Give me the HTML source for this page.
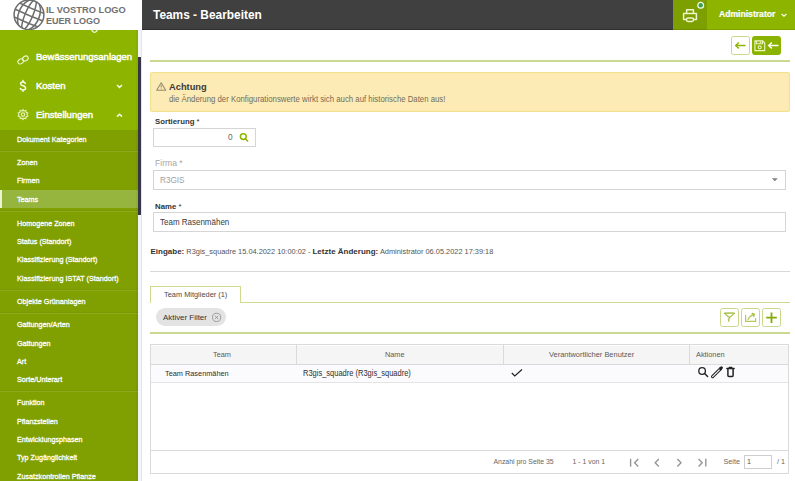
<!DOCTYPE html>
<html><head><meta charset="utf-8">
<style>
*{margin:0;padding:0;box-sizing:border-box}
html,body{width:795px;height:481px;overflow:hidden;background:#fff;font-family:"Liberation Sans",sans-serif}
.abs{position:absolute}
svg{position:absolute;overflow:visible}
#logo{left:0;top:0;width:142px;height:30px;background:#fff}
#logo .t{position:absolute;left:45.5px;font-size:9.3px;font-weight:bold;color:#707070;white-space:nowrap;line-height:10px;transform-origin:0 0}
#side{left:0;top:30px;width:138px;height:451px;background:#809f00;overflow:hidden}
#top{position:absolute;left:0;top:0;width:138px;height:100px;background:#8db500}
.ti{position:absolute;left:36px;color:#fff;font-size:9.5px;white-space:nowrap;line-height:10px;-webkit-text-stroke:0.45px #fff}
.si{position:absolute;left:17px;color:#fff;font-size:7.9px;white-space:nowrap;line-height:7px;-webkit-text-stroke:0.3px #fff;transform-origin:0 0;transform:scaleX(0.912)}
.sep{position:absolute;left:0;width:138px;height:2px;background:#8cab1c;border-top:1px solid #7a9800}
#scroll{left:138px;top:57px;width:3px;height:158px;background:#363648}
#gutter{left:138px;top:30px;width:4px;height:451px;background:#f3f3fa;border-right:1.5px solid #e6e6e6}
#hdr{left:142px;top:0;width:531px;height:30px;background:#404040;border-bottom:1px solid #2e2e2e}
#hdr .t{position:absolute;left:11px;top:9px;color:#fff;font-weight:bold;font-size:11.9px;line-height:12px}
#prn{left:673px;top:0;width:34px;height:30px;background:#7d9f00;border-bottom:1px solid #6f8f00}
#adm{left:707px;top:0;width:88px;height:30px;background:#8db500;border-bottom:1px solid #7fa300}
.lbl{position:absolute;font-size:7.8px;font-weight:bold;color:#333;white-space:nowrap;line-height:9px}
.inp{position:absolute;border:1px solid #d5d5d5;background:#fff}
.btn{position:absolute;border:1.4px solid #c8d78a;border-radius:2.5px;background:#fff}
.tx{position:absolute;white-space:nowrap}
</style></head><body>

<!-- Logo -->
<div id="logo" class="abs">
  <svg style="left:0;top:0" width="60" height="31" viewBox="0 0 60 31">
    <defs><clipPath id="gc"><circle cx="29" cy="14.8" r="15"/></clipPath></defs>
    <g clip-path="url(#gc)" stroke="#6d6d6d" stroke-width="1.5" fill="none">
      <g transform="rotate(23 29 14.8)">
        <ellipse cx="29" cy="14.8" rx="3.9" ry="16"/>
        <ellipse cx="29" cy="14.8" rx="10.4" ry="16"/>
        <path d="M10 14.8 Q29 16 48 14.8"/>
        <path d="M10 7.4 Q29 8.6 48 7.4"/>
        <path d="M10 22.2 Q29 23.4 48 22.2"/>
      </g>
    </g>
    <circle cx="29" cy="14.8" r="14.9" fill="none" stroke="#6d6d6d" stroke-width="1.5"/>
  </svg>
  <div class="t" style="top:5px;font-size:9.6px;transform:scaleX(0.968)">IL VOSTRO LOGO</div>
  <div class="t" style="top:16px;font-size:9.6px;transform:scaleX(0.94)">EUER LOGO</div>
</div>

<!-- Sidebar -->
<div id="side" class="abs">
  <div id="top">
    <svg style="left:90px;top:-2px" width="9" height="6" viewBox="0 0 9 6"><path d="M1.6 1.5 Q2.5 4.6 4.6 4.4 Q6.8 4.2 7.4 1.5" fill="none" stroke="#f2f8dc" stroke-width="1.3"/></svg>
    <svg style="left:16px;top:24px" width="14" height="12" viewBox="0 0 14 12"><g fill="none" stroke="#eef6cc" stroke-width="1.1" transform="rotate(-32 7 6)"><ellipse cx="4.3" cy="6" rx="3" ry="2.3"/><ellipse cx="9.8" cy="6" rx="3" ry="2.3"/></g></svg>
    <div class="ti" style="top:22px">Bewässerungsanlagen</div>
    <svg style="left:19px;top:50px" width="8" height="12" viewBox="0 0 8 12"><g fill="none" stroke="#f8fbe8" stroke-width="1.5" stroke-linecap="round"><path d="M6.3 3.4 Q5.8 2.1 4 2.1 Q1.6 2.1 1.6 3.8 Q1.6 5.2 4 5.8 Q6.6 6.4 6.6 8.2 Q6.6 9.9 4 9.9 Q1.9 9.9 1.4 8.4"/><path d="M4 0.6 V2.1 M4 9.9 V11.3"/></g></svg>
    <div class="ti" style="top:51px">Kosten</div>
    <svg style="left:115.5px;top:54px" width="7" height="5" viewBox="0 0 7 5"><path d="M1 1 L3.5 3.4 L6 1" fill="none" stroke="#f4f9e0" stroke-width="1.5"/></svg>
    <svg style="left:17px;top:79px" width="12" height="11" viewBox="0 0 12 11"><g fill="none" stroke="#e4f0b8" stroke-width="1.15"><path d="M6 0.6 L7 2 L8.8 1.5 L9.1 3.3 L10.8 4 L10 5.6 L10.8 7.2 L9.1 7.8 L8.8 9.6 L7 9.1 L6 10.5 L5 9.1 L3.2 9.6 L2.9 7.8 L1.2 7.2 L2 5.6 L1.2 4 L2.9 3.3 L3.2 1.5 L5 2 Z"/><circle cx="6" cy="5.6" r="1.7"/></g></svg>
    <div class="ti" style="top:80px">Einstellungen</div>
    <svg style="left:115.5px;top:83px" width="7" height="5" viewBox="0 0 7 5"><path d="M1 3.6 L3.5 1.2 L6 3.6" fill="none" stroke="#f4f9e0" stroke-width="1.5"/></svg>
  </div>
  <div class="si" style="top:106px">Dokument Kategorien</div>
  <div class="sep" style="top:120px"></div>
  <div class="si" style="top:129px">Zonen</div>
  <div class="si" style="top:147px">Firmen</div>
  <div class="abs" style="left:0;top:160px;width:138px;height:18px;background:#95b53f"></div>
  <div class="abs" style="left:0;top:160px;width:1.5px;height:18px;background:#eef3cf"></div>
  <div class="si" style="top:166px">Teams</div>
  <div class="sep" style="top:180px"></div>
  <div class="si" style="top:190px">Homogene Zonen</div>
  <div class="si" style="top:208px">Status (Standort)</div>
  <div class="si" style="top:226px">Klassifizierung (Standort)</div>
  <div class="si" style="top:245px">Klassifizierung ISTAT (Standort)</div>
  <div class="sep" style="top:259px"></div>
  <div class="si" style="top:268px">Objekte Grünanlagen</div>
  <div class="sep" style="top:282px"></div>
  <div class="si" style="top:291px">Gattungen/Arten</div>
  <div class="si" style="top:310px">Gattungen</div>
  <div class="si" style="top:328px">Art</div>
  <div class="si" style="top:346px">Sorte/Unterart</div>
  <div class="sep" style="top:360px"></div>
  <div class="si" style="top:369px">Funktion</div>
  <div class="si" style="top:388px">Pflanzstellen</div>
  <div class="si" style="top:406px">Entwicklungsphasen</div>
  <div class="si" style="top:424px">Typ Zugänglichkeit</div>
  <div class="si" style="top:443px">Zusatzkontrollen Pflanze</div>
  <div class="abs" style="left:136px;top:0;width:2px;height:451px;background:rgba(0,0,0,.035)"></div>
</div>
<div id="gutter" class="abs"></div>
<div id="scroll" class="abs"></div>

<!-- Header -->
<div id="hdr" class="abs"><div class="t">Teams - Bearbeiten</div></div>
<div id="prn" class="abs">
  <svg style="left:9px;top:8px" width="16" height="15" viewBox="0 0 16 15"><g fill="none" stroke="#eef4cc" stroke-width="1.5" stroke-linejoin="round"><path d="M4.6 5.5 V1.8 H11.4 V5.5"/><path d="M4 11.6 H1.6 V5.6 H14.4 V11.6 H12"/><rect x="4.4" y="10" width="7.2" height="3.4" rx="1.7"/></g></svg>
  <svg style="left:24px;top:1px" width="8" height="8" viewBox="0 0 8 8"><circle cx="3.7" cy="4.3" r="2.9" fill="#36a351" stroke="#fafff0" stroke-width="1.2"/></svg>
</div>
<div id="adm" class="abs">
  <div class="tx" style="left:12px;top:10px;color:#fff;font-weight:bold;font-size:8.6px;line-height:9px;-webkit-text-stroke:0.2px #fff">Administrator</div>
  <svg style="left:74px;top:13px" width="6" height="4" viewBox="0 0 6 4"><path d="M0.5 0.8 L3 3.2 L5.5 0.8" fill="none" stroke="#fff" stroke-width="1.1"/></svg>
</div>

<!-- Top buttons -->
<div class="btn" style="left:731px;top:36px;width:19px;height:19px"></div>
<svg style="left:735px;top:42px" width="11" height="7" viewBox="0 0 11 7"><g fill="none" stroke="#8db500" stroke-width="1.5"><path d="M0.8 3.5 H10.5"/><path d="M3.8 0.5 L0.8 3.5 L3.8 6.5"/></g></svg>
<div class="abs" style="left:752px;top:36px;width:29px;height:19px;background:#8ab300;border-radius:3px"></div>
<svg style="left:754px;top:40px" width="12" height="12" viewBox="0 0 12 12"><g fill="none" stroke="#eef6c4" stroke-width="1.1"><path d="M0.9 0.9 H8.6 L10.7 3 V10.6 H0.9 Z"/><path d="M2.4 1 V3.7 H8.4 V1"/><path d="M6.3 1.4 V3"/><circle cx="5.7" cy="7.3" r="1.5"/></g></svg>
<svg style="left:768px;top:42px" width="11" height="7" viewBox="0 0 11 7"><g fill="none" stroke="#fff" stroke-width="1.5"><path d="M0.8 3.5 H10.5"/><path d="M3.8 0.5 L0.8 3.5 L3.8 6.5"/></g></svg>
<div class="abs" style="left:150px;top:60px;width:639.5px;height:2px;background:#cad990"></div>

<!-- Alert -->
<div class="abs" style="left:150px;top:72px;width:640px;height:40px;background:#fdebb6;border:1.3px solid #eee48c;border-radius:2px;box-shadow:inset 0 0 0 1px #fce8b0"></div>
<svg style="left:156px;top:82px" width="11" height="9" viewBox="0 0 11 9"><g fill="none" stroke="#958c6c" stroke-width="1.1" stroke-linejoin="round"><path d="M5.2 0.8 L9.7 8.2 H0.7 Z"/><path d="M5.2 3.3 V5.6"/><path d="M5.2 6.5 V7.3"/></g></svg>
<div class="tx" style="left:169px;top:82px;font-size:9.3px;font-weight:bold;color:#3b3a36;line-height:10px">Achtung</div>
<div class="tx" style="left:169px;top:95.5px;font-size:8.2px;color:#746c55;line-height:8px;transform-origin:0 0;transform:scaleX(0.952)">die Änderung der Konfigurationswerte wirkt sich auch auf historische Daten aus!</div>

<!-- Form -->
<div class="lbl" style="left:155px;top:117px">Sortierung <span style="font-weight:normal">*</span></div>
<div class="inp" style="left:153px;top:128px;width:103px;height:19px"></div>
<div class="tx" style="left:228px;top:133px;font-size:8.3px;color:#666;line-height:8px">0</div>
<svg style="left:239px;top:133px" width="10" height="10" viewBox="0 0 10 10"><g fill="none" stroke="#8db500" stroke-width="1.5"><circle cx="4.3" cy="3.6" r="2.9"/><path d="M6.4 5.8 L9 8.6"/></g></svg>
<div class="lbl" style="left:155px;top:159px;color:#a8a8a8;font-weight:normal;font-size:8.6px">Firma *</div>
<div class="inp" style="left:153px;top:170px;width:633px;height:20px"></div>
<div class="tx" style="left:160px;top:177px;font-size:8.2px;color:#a0a0a0;line-height:8px">R3GIS</div>
<svg style="left:771px;top:178px" width="8" height="5" viewBox="0 0 8 5"><path d="M0.8 0.3 H6.8 L3.8 3.3 Z" fill="#808080"/></svg>
<div class="lbl" style="left:155px;top:202px">Name <span style="font-weight:normal">*</span></div>
<div class="inp" style="left:153px;top:212px;width:633px;height:20px"></div>
<div class="tx" style="left:160px;top:218px;font-size:8.7px;color:#3a3a3a;line-height:8px;transform-origin:0 0;transform:scaleX(0.92)">Team Rasenmähen</div>

<div class="tx" style="left:150.5px;top:248px;font-size:7.4px;color:#555;line-height:8px"><b style="color:#333;font-size:8px">Eingabe:</b> R3gis_squadre 15.04.2022 10:00:02 - <b style="color:#333;font-size:8px">Letzte Änderung:</b> Administrator 06.05.2022 17:39:18</div>
<div class="abs" style="left:150px;top:271px;width:640px;height:1px;background:#d8d8d8"></div>

<!-- Tabs -->
<div class="abs" style="left:150px;top:286px;width:91px;height:17px;border:1px solid #cddb8e;border-bottom:none;background:#fff"></div>
<div class="abs" style="left:240px;top:302px;width:549.5px;height:1px;background:#cddb8e"></div>
<div class="tx" style="left:164px;top:290.5px;font-size:8.1px;color:#4a4a4a;line-height:8px;transform-origin:0 0;transform:scaleX(0.914)">Team Mitglieder (1)</div>
<div class="abs" style="left:156px;top:308px;width:70px;height:18px;background:#e3e3e3;border-radius:9px"></div>
<div class="tx" style="left:163px;top:314px;font-size:7.9px;color:#333;line-height:8px">Aktiver Filter</div>
<svg style="left:212px;top:313px" width="10" height="10" viewBox="0 0 10 10"><g fill="none" stroke="#999" stroke-width="0.95"><circle cx="4.6" cy="4.4" r="4.1"/><path d="M3 2.8 L6.2 6 M6.2 2.8 L3 6"/></g></svg>
<div class="btn" style="left:720px;top:308px;width:19px;height:19px"></div>
<svg style="left:723px;top:312px" width="13" height="11" viewBox="0 0 13 11"><g fill="none" stroke="#a9c24a" stroke-linecap="round"><path d="M1.5 1.3 Q6.3 0.6 11.2 1.3" stroke-width="1.5"/><path d="M1.8 1.6 L5.6 5 M11 1.6 L7.2 5" stroke-width="1.1"/><path d="M6.6 5 Q6.6 6.6 5.6 7.3 Q6.3 8 5.6 9.3" stroke-width="1.3"/></g></svg>
<div class="btn" style="left:741px;top:308px;width:19px;height:19px"></div>
<svg style="left:744px;top:312px" width="13" height="11" viewBox="0 0 13 11"><g fill="none" stroke="#b2c956" stroke-width="1.2" stroke-linecap="round"><path d="M1.6 3.3 V9.4 H11.6 V6.6"/><path d="M3.9 7.6 Q5.5 3.8 9.6 2.6"/><path d="M8.2 1.4 L10.3 2.3 L9.6 4.4" stroke="#9cba30"/></g></svg>
<div class="btn" style="left:762px;top:308px;width:19px;height:19px"></div>
<svg style="left:765px;top:311px" width="13" height="13" viewBox="0 0 13 13"><g stroke="#84ab00" stroke-width="1.8"><path d="M6.5 1.4 V12 M1.2 6.7 H11.8"/></g></svg>
<div class="abs" style="left:150px;top:332px;width:639.5px;height:2px;background:#cad990"></div>

<!-- Table -->
<div class="abs" style="left:150px;top:344px;width:639px;height:130px;border:1px solid #dadada"></div>
<div class="abs" style="left:151px;top:345px;width:637px;height:20px;background:#f5f5f5;border-bottom:1px solid #dadada;box-shadow:inset 0 1px 0 #fff"></div>
<div class="abs" style="left:296px;top:345px;width:1px;height:20px;background:#dadada"></div>
<div class="abs" style="left:503px;top:345px;width:1px;height:20px;background:#dadada"></div>
<div class="abs" style="left:689px;top:345px;width:1px;height:20px;background:#dadada"></div>
<div class="tx" style="left:213px;top:351px;font-size:7.3px;color:#5a5a5a;line-height:8px">Team</div>
<div class="tx" style="left:385px;top:351px;font-size:7.3px;color:#5a5a5a;line-height:8px">Name</div>
<div class="tx" style="left:549px;top:351px;font-size:7.45px;color:#5a5a5a;line-height:8px">Verantwortlicher Benutzer</div>
<div class="tx" style="left:696px;top:351px;font-size:7.35px;color:#5a5a5a;line-height:8px">Aktionen</div>
<div class="abs" style="left:151px;top:365px;width:637px;height:17px;background:#fbfbfd"></div>
<div class="abs" style="left:151px;top:382px;width:637px;height:1px;background:#e4e4e4"></div>
<div class="tx" style="left:164.5px;top:369.6px;font-size:8.1px;color:#2e2e2e;line-height:8px;transform-origin:0 0;transform:scaleX(0.907)">Team Rasenmähen</div>
<div class="tx" style="left:302.5px;top:369.6px;font-size:8.2px;color:#2e2e2e;line-height:8px;transform-origin:0 0;transform:scaleX(0.915)">R3gis_squadre (R3gis_squadre)</div>
<svg style="left:511px;top:369px" width="12" height="8" viewBox="0 0 12 8"><path d="M0.8 4 L3.8 7 L11 0.5" fill="none" stroke="#222" stroke-width="1.2"/></svg>
<svg style="left:694px;top:363px" width="46" height="18" viewBox="0 0 46 18">
  <g fill="none" stroke="#222" stroke-linecap="round">
    <circle cx="8.1" cy="8" r="3.3" stroke-width="1.3"/>
    <path d="M10.6 10.5 L13.6 13.6" stroke-width="1.4"/>
    <path d="M18.6 13.6 L26.4 5.8" stroke-width="3.2"/>
    <path d="M18.6 13.6 L26.4 5.8" stroke-width="1.2" stroke="#f4f4f4"/>
    <path d="M26.6 5.6 L27.4 4.8" stroke-width="3"/>
    <path d="M32.8 5.5 H40.2" stroke-width="1.3"/>
    <path d="M35.2 4.4 H37.8" stroke-width="1.4"/>
    <path d="M33.9 6.2 V12.6 Q33.9 13.6 34.9 13.6 H38.1 Q39.1 13.6 39.1 12.6 V6.2" stroke-width="1.5"/>
  </g>
</svg>
<div class="abs" style="left:151px;top:450px;width:637px;height:1px;background:#dadada"></div>
<div class="tx" style="left:493.5px;top:458px;font-size:6.9px;color:#666;line-height:8px">Anzahl pro Seite 35</div>
<div class="tx" style="left:572.5px;top:458px;font-size:6.9px;color:#666;line-height:8px">1 - 1 von 1</div>
<svg style="left:625px;top:452px" width="90" height="20" viewBox="0 0 90 20"><g fill="none" stroke="#969696" stroke-width="1.4"><path d="M5.6 6.8 V14.6"/><path d="M13.2 6.9 L9.6 10.7 L13.2 14.5"/><path d="M33.8 6.9 L30.2 10.7 L33.8 14.5"/><path d="M52.4 6.9 L56 10.7 L52.4 14.5"/><path d="M73.6 6.9 L77.2 10.7 L73.6 14.5"/><path d="M80.8 6.8 V14.6"/></g></svg>
<div class="tx" style="left:723.5px;top:458px;font-size:7.2px;color:#666;line-height:8px">Seite</div>
<div class="abs" style="left:744px;top:455px;width:28px;height:14px;border:1px solid #cfcfcf"></div>
<div class="tx" style="left:747px;top:458px;font-size:7.2px;color:#555;line-height:8px">1</div>
<div class="tx" style="left:777px;top:458px;font-size:7.2px;color:#666;line-height:8px">/ 1</div>

</body></html>
